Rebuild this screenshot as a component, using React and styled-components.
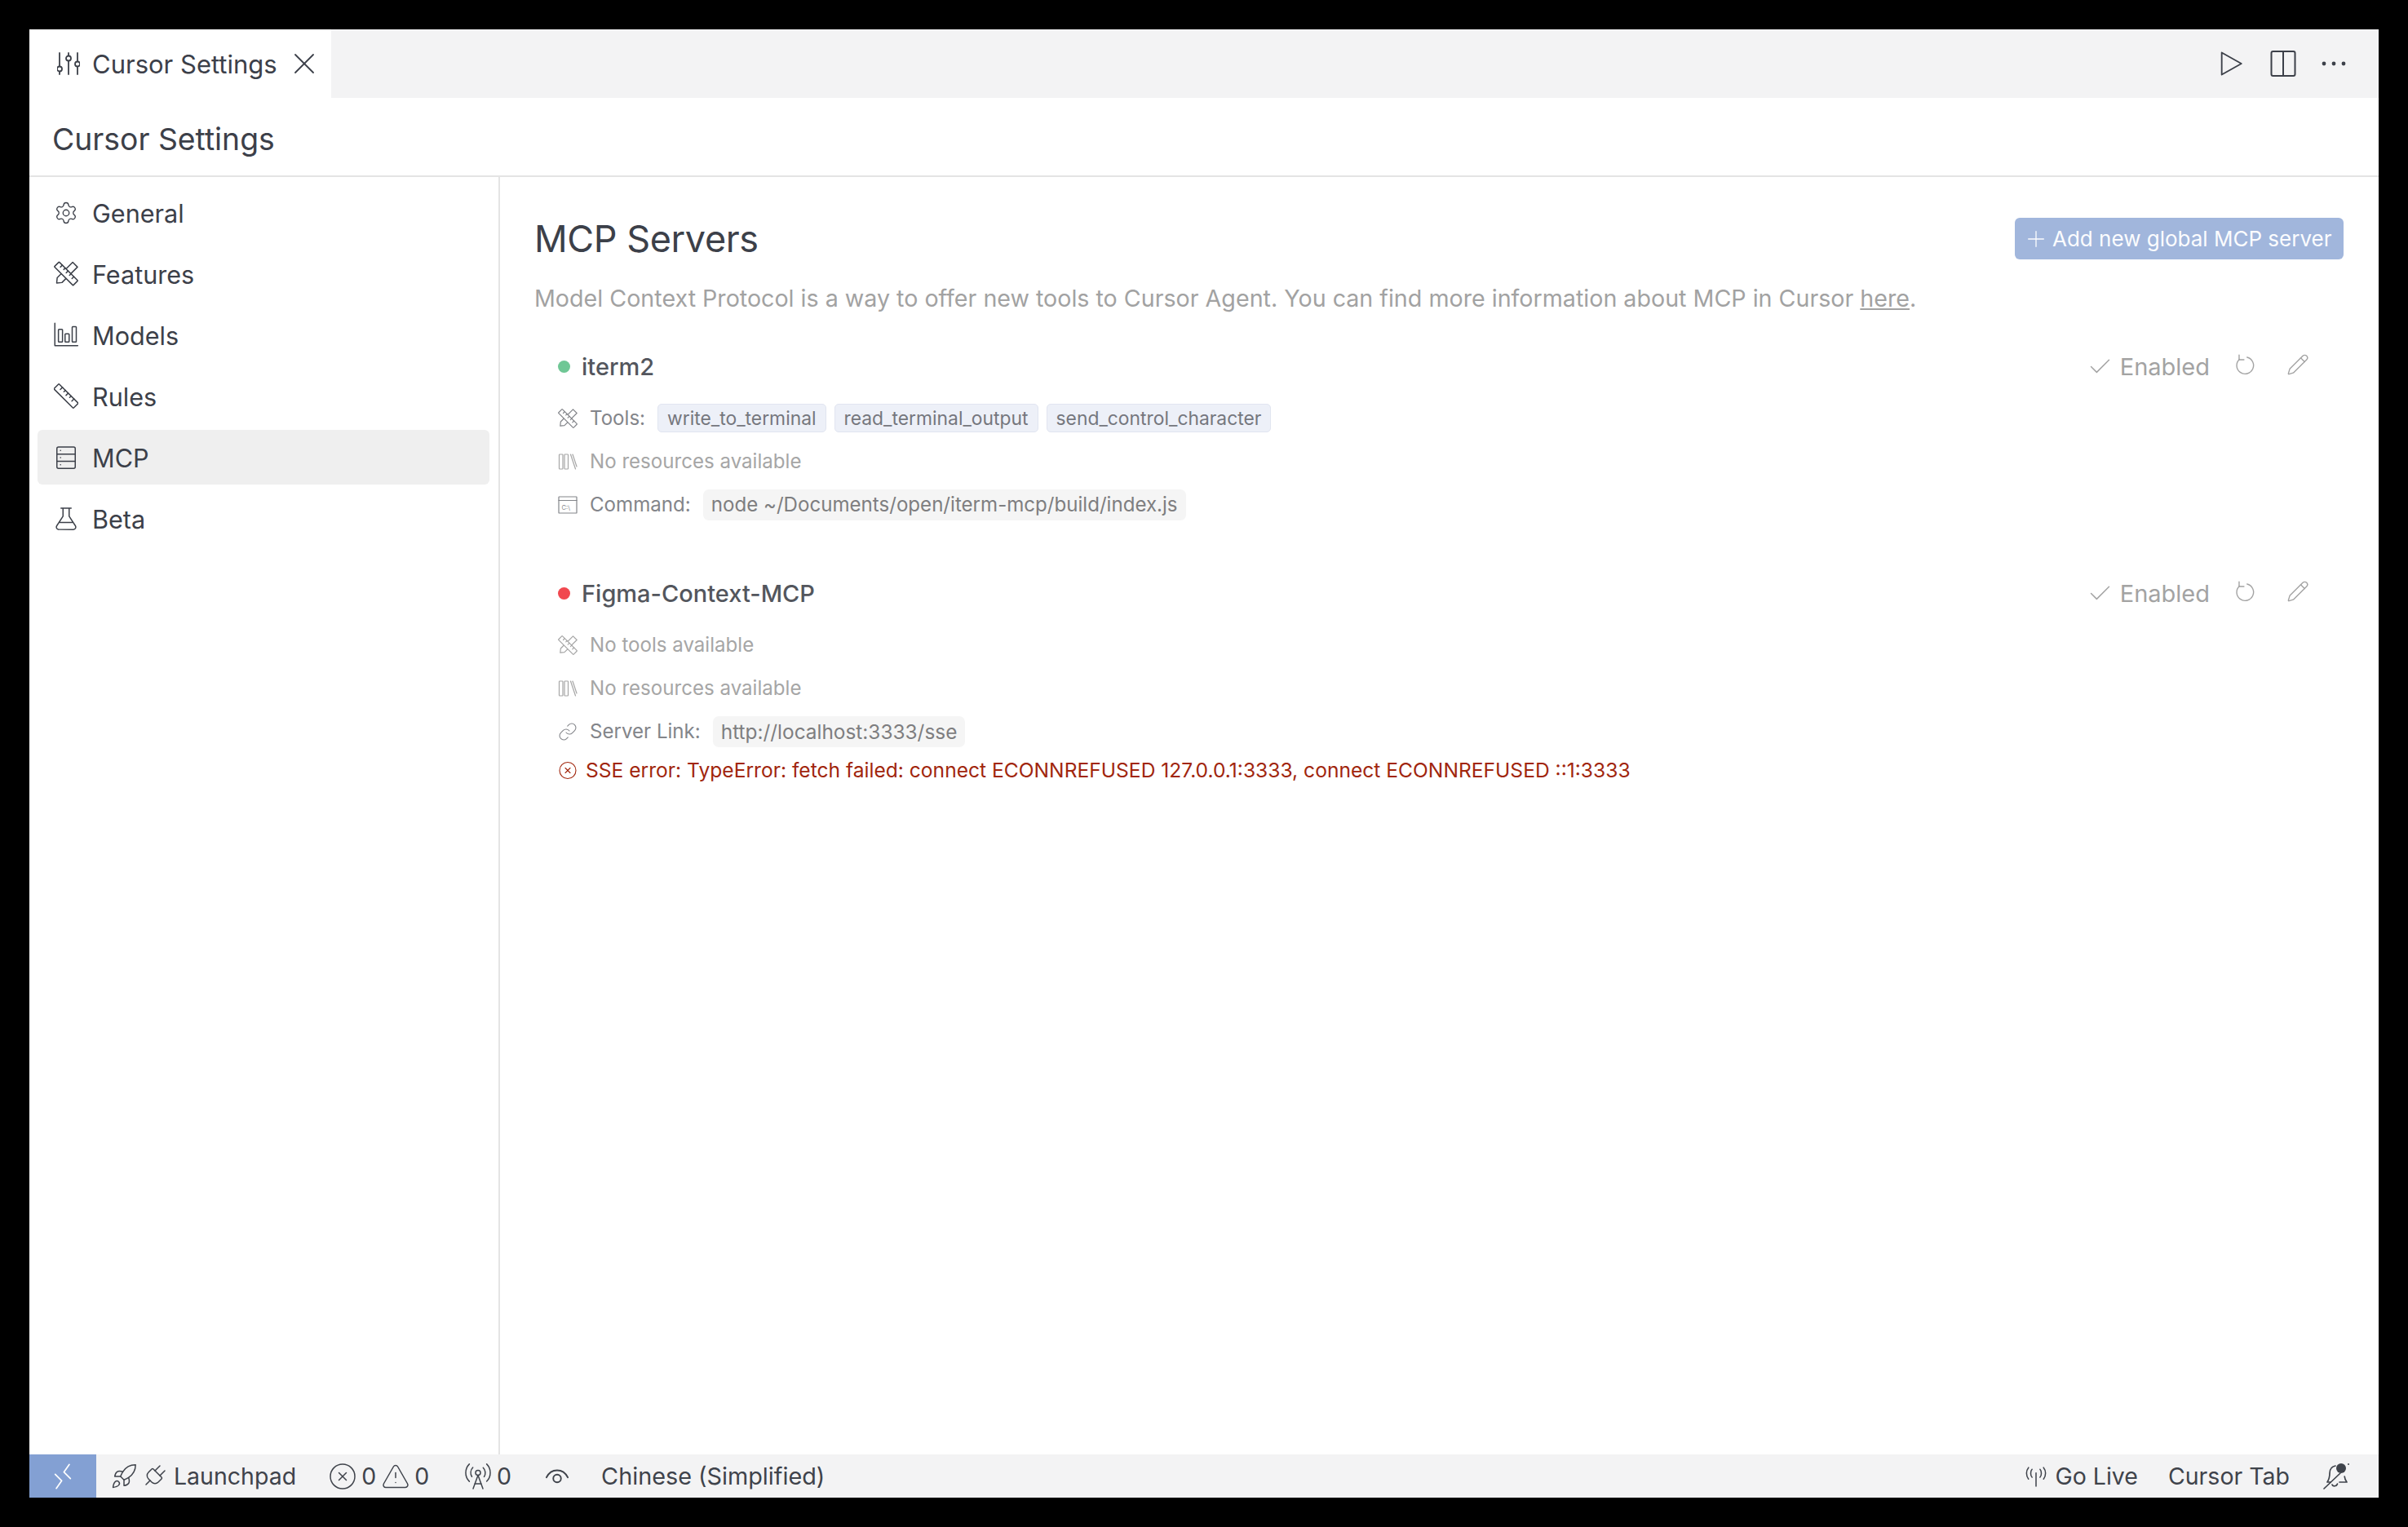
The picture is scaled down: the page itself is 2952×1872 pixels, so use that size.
import React from "react";
import styled, { createGlobalStyle } from "styled-components";
import { Rocket, Plug, CircleX, TriangleAlert, RadioTower, Link as LinkIcon, Pencil, Settings, Plus, Check, X } from "lucide-react";

const Global = createGlobalStyle`
  html, body { margin: 0; padding: 0; background: #000; }
  body { font-family: Inter, "Liberation Sans", sans-serif; -webkit-font-smoothing: antialiased; }
  * { box-sizing: border-box; }
`;

const Stage = styled.div`
  width: 2952px; height: 1872px; padding: 36px; background: #000; overflow: hidden;
`;
const Win = styled.div`
  width: 2880px; height: 1800px; background: #fff; display: flex; flex-direction: column; overflow: hidden;
`;
const TabBar = styled.div`
  height: 84px; flex: none; background: #f3f3f4; display: flex; align-items: stretch; justify-content: space-between;
`;
const Tab = styled.div`
  width: 370px; background: #fff; display: flex; align-items: center; padding: 0 0 0 34px; color: #3c4049; font-size: 31px;
  svg { flex: none; }
`;
const TabLabel = styled.span` margin-left: 15px; flex: 1; white-space: nowrap; `;
const TabClose = styled.span` display: flex; margin-right: 11px; `;
const TabActions = styled.div`
  display: flex; align-items: center; gap: 31px; padding-right: 40px; color: #3c4049;
`;
const PageHeader = styled.div`
  height: 97px; flex: none; border-bottom: 2px solid #e4e4e4; display: flex; align-items: center; padding: 6px 0 0 28px;
  color: #3c4049; font-size: 37.3px;
`;
const Body = styled.div` flex: 1; min-height: 0; display: flex; `;
const Sidebar = styled.nav`
  width: 577px; flex: none; border-right: 2px solid #e4e4e4; padding: 10px 11px 0 10px; display: flex; flex-direction: column; gap: 8px;
`;
const NavItem = styled.div`
  height: 67px; display: flex; align-items: center; gap: 17px; padding: 1px 0 0 20px; border-radius: 6px;
  background: ${p => (p.$active ? "#efefef" : "transparent")}; color: #3c4049; font-size: 30.6px;
`;
const NavIcon = styled.span` width: 30px; height: 30px; display: flex; align-items: center; justify-content: center; flex: none; margin-top: -1px; `;
const Main = styled.main` flex: 1; min-width: 0; padding: 50px 43px 0 43px; display: flex; flex-direction: column; `;
const HeadRow = styled.div` height: 51px; display: flex; align-items: center; justify-content: space-between; `;
const Title = styled.h1` margin: 0 0 0 -1px; font-size: 45px; font-weight: 400; color: #3c4049; letter-spacing: -0.4px; `;
const AddButton = styled.div`
  width: 403px; height: 51px; padding-left: 10px; background: #a1b6dc; color: #fbfcfe; border-radius: 6px; display: flex; align-items: center; gap: 4px; font-size: 26px; white-space: nowrap;
`;
const Desc = styled.p`
  margin: 28px 0 43px -1px; height: 40px; line-height: 39px; font-size: 28.65px; color: #a2a2a2; white-space: nowrap;
`;
const Underlined = styled.span` text-decoration: underline; `;
const Card = styled.section` padding-left: 28px; margin-bottom: 62px; `;
const NameRow = styled.div` height: 40px; display: flex; align-items: center; margin-bottom: 17px; `;
const Dot = styled.span` width: 15px; height: 15px; border-radius: 50%; background: ${p => p.$color}; flex: none; margin: 0 14px 0 0; `;
const Name = styled.span` font-size: 29px; color: #53565d; flex: 1; font-weight: 450; `;
const Status = styled.div` display: flex; align-items: center; color: #a3a3a3; font-size: 29px; margin-right: 30px; `;
const StatusLabel = styled.span` margin-left: 8px; `;
const RowActions = styled.div` display: flex; align-items: center; gap: 38px; color: #a3a3a3; margin-right: 42px; margin-top: -4px; `;
const Row = styled.div`
  height: 53px; display: flex; align-items: center; font-size: 24.1px; color: ${p => (p.$muted ? "#a6a6a6" : "#83858a")};
`;
const RowIcon = styled.span` width: 24px; height: 24px; margin-right: 15px; display: flex; align-items: center; justify-content: center; flex: none; `;
const RowLabel = styled.span` margin-right: 15px; `;
const Badge = styled.span`
  height: 35px; padding: 0 11px; display: inline-flex; align-items: center; background: #edf0f8; border: 1px solid #e1e5f0; border-radius: 5px;
  font-size: 22.85px; color: #75777e; margin-right: 10px;
`;
const Chip = styled.span`
  height: 38px; padding: 0 10px; display: inline-flex; align-items: center; background: #f5f5f5; border-radius: 7px; font-size: ${p => p.$fs || 24.1}px; color: #7e7e80;
`;
const ErrorRow = styled.div`
  height: 42px; display: flex; align-items: center; font-size: 24.6px; color: #a1260d;
`;
const ErrorIcon = styled.span` width: 24px; height: 24px; margin-right: 10px; display: flex; align-items: center; justify-content: center; flex: none; `;
const StatusBar = styled.footer`
  height: 53px; flex: none; background: #f3f3f4; display: flex; align-items: center; justify-content: space-between; color: #3f434b; font-size: 28.5px;
`;
const BarSide = styled.div` display: flex; align-items: center; height: 100%; `;
const RemoteBox = styled.div` width: 82px; height: 100%; background: #83a0d3; display: flex; align-items: center; justify-content: center; color: #fff; `;
const BarItem = styled.div`
  display: flex; align-items: center; gap: ${p => p.$gap ?? 8}px; margin-left: ${p => p.$ml || 0}px; margin-right: ${p => p.$mr || 0}px; white-space: nowrap;
`;
const LaunchpadLabel = styled.span` margin-left: 4px; `;
const Language = styled.span` font-size: 28.8px; `;
const PlugTilt = styled.span` display: flex; transform: rotate(45deg); `;

const Svg = ({ size = 24, sw = 1.3, children, style }) => (
  <svg width={size} height={size} viewBox="0 0 24 24" fill="none" stroke="currentColor" strokeWidth={sw} strokeLinecap="round" strokeLinejoin="round" style={style}>{children}</svg>
);

const SlidersIcon = () => (
  <svg width="28" height="28" viewBox="0 0 28 28" fill="none" stroke="currentColor" strokeWidth="1.800" strokeLinecap="round">
    <path d="M3 1v16M3 24v3" /><circle cx="3" cy="20.500" r="3" />
    <path d="M14 1v3M14 11v16" /><circle cx="14" cy="7.500" r="3" />
    <path d="M25 1v10M25 18v9" /><circle cx="25" cy="14.500" r="3" />
  </svg>
);
const ToolsIcon = (p) => (
  <Svg {...p}>
    <g transform="rotate(-45 12 12)"><path d="M-1 12l4-3.300h21.500v6.600H3z" fill="#fff" /></g>
    <g transform="rotate(45 12 12)">
      <rect x="-1" y="8.700" width="26" height="6.600" rx=".6" fill="#fff" />
      <path d="M3.500 8.700v2.600M7.500 8.700v2M11.500 8.700v2.600M15.500 8.700v2M19.500 8.700v2.600" />
    </g>
  </Svg>
);
const ModelsIcon = (p) => (
  <Svg {...p}><path d="M1 .5v22h22.500" /><rect x="4.500" y="6.500" width="4" height="12.500" rx=".6" /><rect x="11" y="11" width="4" height="8" rx=".6" /><rect x="18" y="4" width="4" height="15" rx=".6" /></Svg>
);
const RulerIcon = (p) => (
  <Svg {...p}><g transform="rotate(45 12 12)"><rect x="-1.500" y="8.500" width="27" height="7" rx=".8" /><path d="M3.500 8.500v3M7.500 8.500v2M11.500 8.500v3M15.500 8.500v2M19.500 8.500v3" /></g></Svg>
);
const ServerIcon = (p) => (
  <Svg {...p}><rect x="3" y="1.500" width="18" height="21" rx="1.600" /><path d="M3 8.500h18M3 15.500h18M6.500 5h.1M6.500 12h.1M6.500 19h.1" /></Svg>
);
const FlaskIcon = (p) => (
  <Svg {...p}><path d="M7 1.500h10M9 1.500v8L2.800 19a2.300 2.300 0 0 0 2 3.500h14.400a2.300 2.300 0 0 0 2-3.500L15 9.500V1.500M6 15.500h12" /></Svg>
);
const BooksIcon = (p) => (
  <Svg {...p}><rect x="1.500" y="3" width="4.500" height="18" rx=".7" /><rect x="8" y="3" width="4.500" height="18" rx=".7" /><path d="M15.500 3l6 18" /><path d="M18 3l5 15" /></Svg>
);
const TermIcon = (p) => (
  <Svg {...p} sw={1.2}>
    <rect x="1" y="2" width="22" height="20" rx=".6" /><path d="M1 6.500h22" />
    <text x="4.500" y="17.500" fontSize="7.500" stroke="none" fill="currentColor" fontFamily="Inter, sans-serif">C:\</text>
  </Svg>
);
const RefreshIcon = (p) => (
  <Svg {...p}><path d="M14.500 3.700A9.500 9.500 0 1 1 5.800 6" /><path d="M5.500 1v5.500H11" /></Svg>
);
const RemoteIcon = () => (
  <Svg size={32} sw={1.300}><path d="M5 10l6 6-5 7" /><path d="M18 1l-5 7 6 6" /></Svg>
);
const EyeIcon = () => (
  <Svg size={30} sw={1.500}><path d="M1.500 13C4 8 8 6 12 6s8 2 10.500 7" /><circle cx="12" cy="14" r="3.800" /></Svg>
);
const GoLiveIcon = () => (
  <Svg size={26} sw={1.400}>
    <path d="M12 8v15" /><path d="M7.500 4C5.500 6 5.500 11 7.500 13M16.500 4c2 2 2 7 0 9M3.500 2C.500 5.500 .500 11 3.500 15M20.500 2c3 3.500 3 9 0 13" />
  </Svg>
);
const BellIcon = () => (
  <svg width="34" height="34" viewBox="0 0 34 34" fill="none" stroke="currentColor" strokeWidth="1.700" strokeLinecap="round" strokeLinejoin="round">
    <path d="M16 4c-5 1-7 4-7 9 0 5-1 8-3 11h4M21 24h9c-1.500-2-2.500-3.500-2.800-7" />
    <path d="M2 32L22 13" />
    <path d="M12 27c.5 2.500 5.500 2.500 6.500-1" />
    <circle cx="23" cy="7" r="6" fill="currentColor" stroke="none" />
    <circle cx="32" cy="2" r="1" fill="currentColor" stroke="none" />
  </svg>
);
const PlayIcon = () => (
  <Svg size={34} sw={1.300}><path d="M4 2.500l17 9.500-17 9.500z" /></Svg>
);
const SplitIcon = () => (
  <svg width="32" height="32" viewBox="0 0 32 32" fill="none" stroke="currentColor" strokeWidth="2"><rect x="1.500" y="1" width="29" height="30" rx="2" /><path d="M16 1v30" /></svg>
);
const MoreIcon = () => (
  <svg width="30" height="6" viewBox="0 0 30 6" fill="currentColor"><circle cx="3" cy="3" r="2.400" /><circle cx="15" cy="3" r="2.400" /><circle cx="27" cy="3" r="2.400" /></svg>
);

const nav = [
  ["General", <Settings size={36} strokeWidth={1.050} />],
  ["Features", <ToolsIcon size={31} sw={1.200} />],
  ["Models", <ModelsIcon size={31} sw={1.200} />],
  ["Rules", <RulerIcon size={31} sw={1.200} />],
  ["MCP", <ServerIcon size={30} sw={1.200} />],
  ["Beta", <FlaskIcon size={30} sw={1.200} />],
];

const ServerActions = () => (
  <>
    <Status><Check size={33} strokeWidth={1.050} /><StatusLabel>Enabled</StatusLabel></Status>
    <RowActions><RefreshIcon size={26} sw={1.300} /><Pencil size={28} strokeWidth={1.200} /></RowActions>
  </>
);

export default function App() {
  return (
    <Stage>
      <Global />
      <Win>
        <TabBar>
          <Tab>
            <SlidersIcon />
            <TabLabel>Cursor Settings</TabLabel>
            <TabClose><X size={44} strokeWidth={1} /></TabClose>
          </Tab>
          <TabActions>
            <PlayIcon /><SplitIcon /><MoreIcon />
          </TabActions>
        </TabBar>
        <PageHeader>Cursor Settings</PageHeader>
        <Body>
          <Sidebar>
            {nav.map(([label, icon]) => (
              <NavItem key={label} $active={label === "MCP"}>
                <NavIcon>{icon}</NavIcon>
                {label}
              </NavItem>
            ))}
          </Sidebar>
          <Main>
            <HeadRow>
              <Title>MCP Servers</Title>
              <AddButton><Plus size={32} strokeWidth={1} />Add new global MCP server</AddButton>
            </HeadRow>
            <Desc>Model Context Protocol is a way to offer new tools to Cursor Agent. You can find more information about MCP in Cursor <Underlined>here</Underlined>.</Desc>
            <Card>
              <NameRow><Dot $color="#6fc795" /><Name>iterm2</Name><ServerActions /></NameRow>
              <Row>
                <RowIcon><ToolsIcon size={24} sw={1.200} /></RowIcon>
                <RowLabel>Tools:</RowLabel>
                <Badge>write_to_terminal</Badge>
                <Badge>read_terminal_output</Badge>
                <Badge>send_control_character</Badge>
              </Row>
              <Row $muted><RowIcon><BooksIcon size={24} sw={1.200} /></RowIcon>No resources available</Row>
              <Row>
                <RowIcon><TermIcon size={24} /></RowIcon>
                <RowLabel>Command:</RowLabel>
                <Chip>node ~/Documents/open/iterm-mcp/build/index.js</Chip>
              </Row>
            </Card>
            <Card>
              <NameRow><Dot $color="#f1484f" /><Name>Figma-Context-MCP</Name><ServerActions /></NameRow>
              <Row $muted><RowIcon><ToolsIcon size={24} sw={1.200} /></RowIcon>No tools available</Row>
              <Row $muted><RowIcon><BooksIcon size={24} sw={1.200} /></RowIcon>No resources available</Row>
              <Row>
                <RowIcon><LinkIcon size={26} strokeWidth={1.100} /></RowIcon>
                <RowLabel>Server Link:</RowLabel>
                <Chip $fs={24.4}>http://localhost:3333/sse</Chip>
              </Row>
              <ErrorRow>
                <ErrorIcon><CircleX size={27} strokeWidth={1.100} /></ErrorIcon>
                SSE error: TypeError: fetch failed: connect ECONNREFUSED 127.0.0.1:3333, connect ECONNREFUSED ::1:3333
              </ErrorRow>
            </Card>
          </Main>
        </Body>
        <StatusBar>
          <BarSide>
            <RemoteBox><RemoteIcon /></RemoteBox>
            <BarItem $ml={17} $gap={3}><Rocket size={34} strokeWidth={1.050} /><PlugTilt><Plug size={34} strokeWidth={1.050} /></PlugTilt><LaunchpadLabel>Launchpad</LaunchpadLabel></BarItem>
            <BarItem $ml={39} $gap={5}><CircleX size={36} strokeWidth={1} />0</BarItem>
            <BarItem $ml={6} $gap={5}><TriangleAlert size={36} strokeWidth={1} />0</BarItem>
            <BarItem $ml={42} $gap={5}><RadioTower size={36} strokeWidth={1} />0</BarItem>
            <BarItem $ml={41}><EyeIcon /></BarItem>
            <BarItem $ml={39}><Language>Chinese (Simplified)</Language></BarItem>
          </BarSide>
          <BarSide>
            <BarItem $gap={10}><GoLiveIcon />Go Live</BarItem>
            <BarItem $ml={37}>Cursor Tab</BarItem>
            <BarItem $ml={40} $mr={35}><BellIcon /></BarItem>
          </BarSide>
        </StatusBar>
      </Win>
    </Stage>
  );
}
